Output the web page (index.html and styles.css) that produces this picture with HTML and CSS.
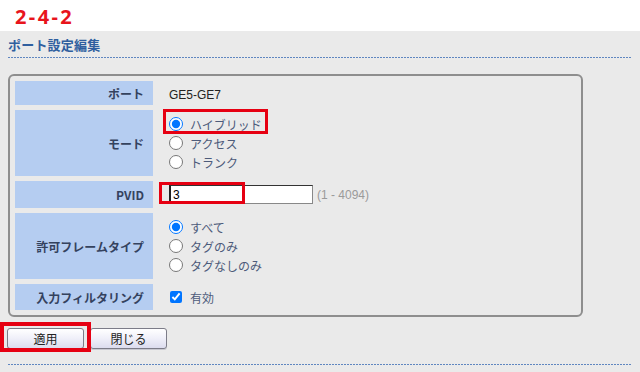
FILE: index.html
```html
<!DOCTYPE html>
<html lang="ja">
<head>
<meta charset="utf-8">
<title>ポート設定編集</title>
<link rel="stylesheet" href="styles.css">
</head>
<body>
<div class="top"><span class="step">2-4-2</span></div>
<div class="main">
  <div class="title">ポート設定編集</div>
  <div class="dots"></div>
  <div class="panel">
    <table class="form">
      <tr class="r1">
        <th>ポート</th>
        <td><span class="val">GE5-GE7</span></td>
      </tr>
      <tr class="r2">
        <th>モード</th>
        <td>
          <div class="opts">
            <label class="opt"><input type="radio" name="mode" checked><span>ハイブリッド</span></label>
            <label class="opt"><input type="radio" name="mode"><span>アクセス</span></label>
            <label class="opt"><input type="radio" name="mode"><span>トランク</span></label>
          </div>
        </td>
      </tr>
      <tr class="r3">
        <th>PVID</th>
        <td><div class="pvid"><input class="txt" type="text" value="3"><span class="range">(1 - 4094)</span></div></td>
      </tr>
      <tr class="r4">
        <th>許可フレームタイプ</th>
        <td>
          <div class="opts">
            <label class="opt"><input type="radio" name="ft" checked><span>すべて</span></label>
            <label class="opt"><input type="radio" name="ft"><span>タグのみ</span></label>
            <label class="opt"><input type="radio" name="ft"><span>タグなしのみ</span></label>
          </div>
        </td>
      </tr>
      <tr class="r5">
        <th>入力フィルタリング</th>
        <td><label class="opt"><input type="checkbox" class="chk" checked><span>有効</span></label></td>
      </tr>
    </table>
  </div>
  <div class="buttons">
    <button class="btn">適用</button>
    <button class="btn">閉じる</button>
  </div>
  <div class="dots dots-bottom"></div>
</div>
<div class="mark mark-mode"></div>
<div class="mark mark-pvid"></div>
<div class="mark mark-apply"></div>
</body>
</html>
```
FILE: styles.css
```css
html, body {
  margin: 0;
  padding: 0;
}
body {
  width: 640px;
  height: 372px;
  background: #eaeaea;
  font-family: "Noto Sans CJK JP", "Liberation Sans", sans-serif;
  position: relative;
  overflow: hidden;
}
.top {
  height: 31px;
  background: #ffffff;
  box-sizing: border-box;
  padding-left: 15px;
  padding-top: 4px;
}
.step {
  font-family: "Noto Sans", "Liberation Sans", sans-serif;
  font-weight: bold;
  font-size: 20px;
  line-height: 26px;
  letter-spacing: 2.4px;
  color: #e8141c;
}
.main {
  padding: 0 8px;
}
.title {
  padding-top: 6px;
  font-size: 13px;
  line-height: 16px;
  font-weight: bold;
  color: #2f5f9f;
  letter-spacing: 0.2px;
}
.dots {
  margin-top: 4px;
  height: 1px;
  width: 624px;
  background: repeating-linear-gradient(to right, #5f86c0 0 2px, transparent 2px 3px);
}
.dots-bottom {
  margin-top: 15px;
}
.panel {
  margin-top: 16px;
  width: 575px;
  box-sizing: border-box;
  border: 2px solid #8e8e8e;
  border-radius: 6px;
}
.form {
  width: 100%;
  border-collapse: separate;
  border-spacing: 5px;
}
.form th {
  width: 129px;
  background: #b5cdf1;
  text-align: right;
  padding: 0 9px 0 0;
  font-size: 12px;
  font-weight: bold;
  color: #34425e;
}
.form td {
  padding: 0 0 0 11px;
  font-size: 12px;
  color: #222;
  vertical-align: middle;
}
.r1 th { height: 24px; }
.r2 th { height: 66px; }
.r3 th { height: 27px; }
.r4 th { height: 66px; }
.r5 th { height: 26px; }
.val {
  font-family: "Liberation Sans", Arial, sans-serif;
  font-size: 12px;
  color: #222;
}
.opts {
  display: flex;
  flex-direction: column;
}
.opt {
  display: flex;
  align-items: center;
  height: 19px;
  font-size: 12px;
  color: #4d5b7a;
}
.opt input {
  margin: 0 7px 0 0;
  width: 14px;
  height: 14px;
}
.opt .chk {
  margin: 0 8px 0 1px;
  width: 12px;
  height: 12px;
}
.pvid {
  display: flex;
  align-items: center;
}
.txt {
  width: 144px;
  height: 19px;
  box-sizing: border-box;
  margin: 0;
  padding: 0 2px;
  border-style: solid;
  border-width: 1px;
  border-color: #333 #888 #888 #222;
  border-left-width: 2px;
  background: #fff;
  font-family: "Liberation Sans", Arial, sans-serif;
  font-size: 12px;
  color: #000;
  outline: none;
}
.range {
  margin-left: 4px;
  font-family: "Liberation Sans", Arial, sans-serif;
  font-size: 12px;
  color: #9a9a9a;
}
.buttons {
  margin-top: 11px;
  margin-left: -1px;
  display: flex;
  gap: 6px;
}
.btn {
  width: 77px;
  height: 21px;
  margin: 0;
  padding: 0;
  border: 1px solid #7c7c88;
  border-radius: 3px;
  background: linear-gradient(#ffffff, #f1f1fa 45%, #dcdcee);
  box-shadow: 0 1px 0 #c8c8d0;
  font-family: "Noto Sans CJK JP", sans-serif;
  font-size: 12px;
  color: #222;
}
.mark {
  position: absolute;
  box-sizing: border-box;
  border: 3px solid #e60012;
}
.mark-mode {
  left: 163px;
  top: 109px;
  width: 105px;
  height: 25px;
}
.mark-pvid {
  left: 159px;
  top: 182px;
  width: 86px;
  height: 22px;
}
.mark-apply {
  left: 0;
  top: 322px;
  width: 91px;
  height: 30px;
  border-width: 4px;
}
```
